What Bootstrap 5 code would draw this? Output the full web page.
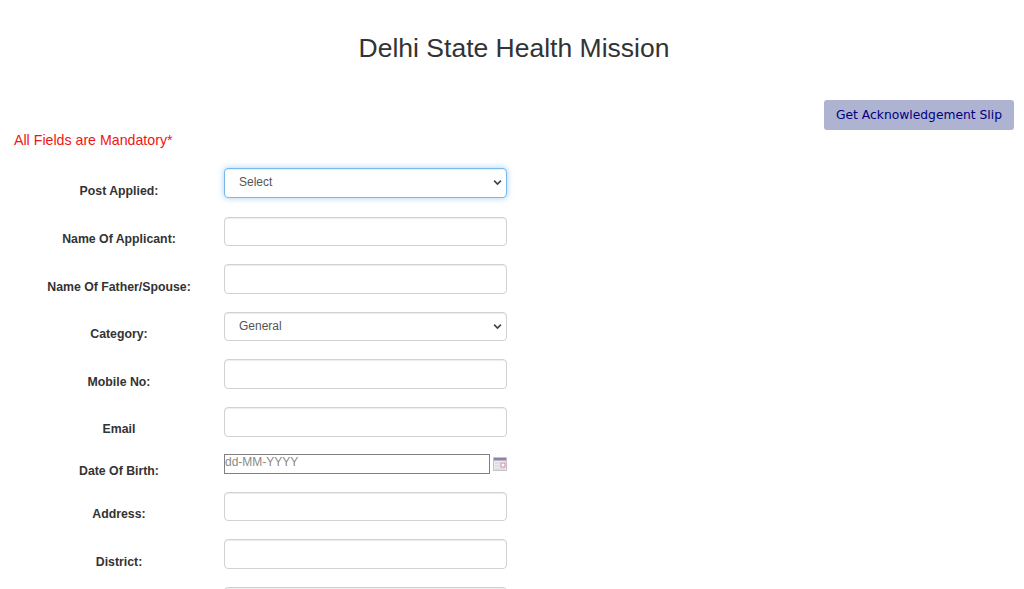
<!DOCTYPE html>
<html lang="en">
<head>
<meta charset="utf-8">
<title>Delhi State Health Mission</title>
<link href="https://cdn.jsdelivr.net/npm/bootstrap@5.3.0/dist/css/bootstrap.min.css" rel="stylesheet">
<style>
html, body { height: 589px; overflow: hidden; }
body { font-family: "Liberation Sans", Arial, sans-serif; background: #fff; color: #333; }
.site-title { font-size: 26.5px; line-height: 32px; font-weight: 400; color: #333; padding-top: 32px; margin: 0 0 0 4px; }
.top-bar { padding: 36px 10px 0 14px; height: 66px; }
.slip-btn { font-family: "DejaVu Sans", Verdana, sans-serif; font-size: 12.3px; line-height: 16px; width: 190px; height: 30px; padding: 0; color: #000080; background: #adb3d1; border: 0; border-radius: 3px; }
.notice { color: #f01414; font-size: 14.2px; line-height: 16px; padding-top: 2px; margin-bottom: 20px; }
.apply-form { padding-left: 14px; }
.field-row { margin-bottom: 18px; }
.field-row.after-first { margin-bottom: 19px; }
.field-row.before-dob { margin-bottom: 17px; }
.field-label { width: 210px; flex: none; text-align: center; font-weight: 700; font-size: 12.3px; line-height: 14px; color: #333; padding-top: 15.5px; margin: 0; }
.field-box { width: 282.6px; height: 29.6px; font-size: 12px; padding: 0 14px; color: #555; border: 1px solid #d2d2d2; border-radius: 4px; box-shadow: inset 0 1px 1px rgba(0,0,0,.075); }
select.field-box { background-image: url("data:image/svg+xml,%3csvg xmlns='http://www.w3.org/2000/svg' viewBox='0 0 12 8'%3e%3cpath fill='none' stroke='%23444' stroke-width='2.2' d='M1.5 1.5 6 6l4.5-4.5'/%3e%3c/svg%3e"); background-size: 9px 7px; background-position: right 4px center; line-height: 26px; padding-bottom: 3px; }
select.field-box.is-current { border-color: #79b8ea; box-shadow: inset 0 1px 1px rgba(0,0,0,.075), 0 0 6px rgba(102,175,233,.6); }
.dob-row { margin-bottom: 14px; }
.dob-label { padding-top: 10px; }
.dob-box { width: 266px; height: 20px; font-size: 12px; line-height: 14px; padding: 0 0 4px 0; color: #555; border: 1px solid #808080; border-radius: 0; box-shadow: none; font-family: "Liberation Sans", Arial, sans-serif; }
.dob-box::placeholder { color: #8a8a8a; opacity: 1; }
.cal-icon { margin: 3px 0 0 3px; flex: none; }
.blank-label { height: 1px; padding: 0; }
</style>
</head>
<body>
<h1 class="site-title text-center">Delhi State Health Mission</h1>
<div class="top-bar d-flex justify-content-end align-items-start">
  <button type="button" class="btn slip-btn">Get Acknowledgement Slip</button>
</div>
<form class="apply-form">
  <div class="notice">All Fields are Mandatory*</div>
  <div class="d-flex field-row after-first">
    <label class="field-label">Post Applied:</label>
    <select class="form-select field-box is-current"><option>Select</option></select>
  </div>
  <div class="d-flex field-row">
    <label class="field-label">Name Of Applicant:</label>
    <input type="text" class="form-control field-box">
  </div>
  <div class="d-flex field-row">
    <label class="field-label">Name Of Father/Spouse:</label>
    <input type="text" class="form-control field-box">
  </div>
  <div class="d-flex field-row">
    <label class="field-label">Category:</label>
    <select class="form-select field-box"><option>General</option></select>
  </div>
  <div class="d-flex field-row">
    <label class="field-label">Mobile No:</label>
    <input type="text" class="form-control field-box">
  </div>
  <div class="d-flex field-row before-dob">
    <label class="field-label">Email</label>
    <input type="text" class="form-control field-box">
  </div>
  <div class="d-flex dob-row">
    <label class="field-label dob-label">Date Of Birth:</label>
    <input type="text" class="form-control dob-box" placeholder="dd-MM-YYYY">
    <svg class="cal-icon" width="14" height="14" viewBox="0 0 14 14" aria-hidden="true">
      <rect x=".5" y=".5" width="13" height="13" fill="#eceaf0" stroke="#c4c2cc"/>
      <rect x="1" y="1" width="12" height="2.5" fill="#8886a8"/>
      <rect x="8" y="6" width="4" height="4" fill="#fff" stroke="#d98a98"/>
      <path d="M2 6h5M2 9h5M2 12h10" stroke="#d2d0da"/>
    </svg>
  </div>
  <div class="d-flex field-row">
    <label class="field-label">Address:</label>
    <input type="text" class="form-control field-box">
  </div>
  <div class="d-flex field-row">
    <label class="field-label">District:</label>
    <input type="text" class="form-control field-box">
  </div>
  <div class="d-flex field-row">
    <div class="field-label blank-label"></div>
    <input type="text" class="form-control field-box">
  </div>
</form>
<script src="https://cdn.jsdelivr.net/npm/bootstrap@5.3.0/dist/js/bootstrap.bundle.min.js"></script>
</body>
</html>
